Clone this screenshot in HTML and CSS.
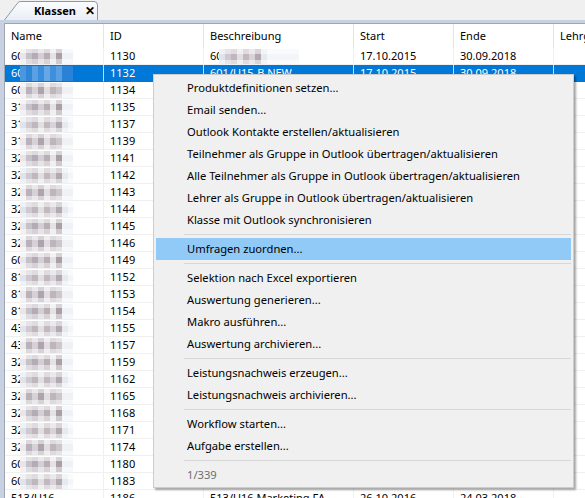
FILE: index.html
```html
<!DOCTYPE html>
<html lang="de">
<head>
    <meta charset="UTF-8">
    <title>Klassen</title>
    <link rel="stylesheet" href="styles.css">
</head>
<body>
<div class="page">
    <div class="tabstrip">
        <div class="tab">
            <svg class="tab-shape" width="95" height="20" viewBox="0 0 95 20">
                <defs>
                    <linearGradient id="tabfill" x1="0" y1="0" x2="0" y2="1">
                        <stop offset="0" stop-color="#fbfcfe"/>
                        <stop offset="1" stop-color="#e9eef7"/>
                    </linearGradient>
                </defs>
                <path d="M0.5 20 L14 2.5 Q15 1.5 17 1.5 L90 1.5 Q93.5 1.5 93.5 5 L93.5 20" fill="url(#tabfill)" stroke="#8d98a8"/>
            </svg>
            <span class="tab-title">Klassen</span>
            <span class="tab-close">&#x2715;</span>
        </div>
    </div>

    <div class="frame">
        <div class="grid">
            <div class="row head">
                <div class="cell">Name</div><div class="cell">ID</div><div class="cell">Beschreibung</div><div class="cell">Start</div><div class="cell">Ende</div><div class="cell">Lehrg</div>
            </div>
            <div class="row">
                <div class="cell">60<span class="blur b1"></span></div><div class="cell">1130</div><div class="cell">60<span class="blur b2 wide"></span></div><div class="cell">17.10.2015</div><div class="cell">30.09.2018</div><div class="cell"></div>
            </div>
            <div class="row selected">
                <div class="cell">60<span class="blur sel"></span></div><div class="cell">1132</div><div class="cell">601/U15-B NEW</div><div class="cell">17.10.2015</div><div class="cell">30.09.2018</div><div class="cell"></div>
            </div>
            <div class="row"><div class="cell">60<span class="blur b3"></span></div><div class="cell">1134</div><div class="cell"></div><div class="cell"></div><div class="cell"></div><div class="cell"></div></div>
            <div class="row"><div class="cell">31<span class="blur b1"></span></div><div class="cell">1135</div><div class="cell"></div><div class="cell"></div><div class="cell"></div><div class="cell"></div></div>
            <div class="row"><div class="cell">31<span class="blur b2"></span></div><div class="cell">1137</div><div class="cell"></div><div class="cell"></div><div class="cell"></div><div class="cell"></div></div>
            <div class="row"><div class="cell">31<span class="blur b3"></span></div><div class="cell">1139</div><div class="cell"></div><div class="cell"></div><div class="cell"></div><div class="cell"></div></div>
            <div class="row"><div class="cell">32<span class="blur b1"></span></div><div class="cell">1141</div><div class="cell"></div><div class="cell"></div><div class="cell"></div><div class="cell"></div></div>
            <div class="row"><div class="cell">32<span class="blur b2"></span></div><div class="cell">1142</div><div class="cell"></div><div class="cell"></div><div class="cell"></div><div class="cell"></div></div>
            <div class="row"><div class="cell">32<span class="blur b3"></span></div><div class="cell">1143</div><div class="cell"></div><div class="cell"></div><div class="cell"></div><div class="cell"></div></div>
            <div class="row"><div class="cell">32<span class="blur b2"></span></div><div class="cell">1144</div><div class="cell"></div><div class="cell"></div><div class="cell"></div><div class="cell"></div></div>
            <div class="row"><div class="cell">32<span class="blur b1"></span></div><div class="cell">1145</div><div class="cell"></div><div class="cell"></div><div class="cell"></div><div class="cell"></div></div>
            <div class="row"><div class="cell">32<span class="blur b3"></span></div><div class="cell">1146</div><div class="cell"></div><div class="cell"></div><div class="cell"></div><div class="cell"></div></div>
            <div class="row"><div class="cell">60<span class="blur b1"></span></div><div class="cell">1149</div><div class="cell"></div><div class="cell"></div><div class="cell"></div><div class="cell"></div></div>
            <div class="row"><div class="cell">81<span class="blur b2"></span></div><div class="cell">1152</div><div class="cell"></div><div class="cell"></div><div class="cell"></div><div class="cell"></div></div>
            <div class="row"><div class="cell">81<span class="blur b3"></span></div><div class="cell">1153</div><div class="cell"></div><div class="cell"></div><div class="cell"></div><div class="cell"></div></div>
            <div class="row"><div class="cell">81<span class="blur b1"></span></div><div class="cell">1154</div><div class="cell"></div><div class="cell"></div><div class="cell"></div><div class="cell"></div></div>
            <div class="row"><div class="cell">43<span class="blur b2"></span></div><div class="cell">1155</div><div class="cell"></div><div class="cell"></div><div class="cell"></div><div class="cell"></div></div>
            <div class="row"><div class="cell">43<span class="blur b3"></span></div><div class="cell">1157</div><div class="cell"></div><div class="cell"></div><div class="cell"></div><div class="cell"></div></div>
            <div class="row"><div class="cell">32<span class="blur b1"></span></div><div class="cell">1159</div><div class="cell"></div><div class="cell"></div><div class="cell"></div><div class="cell"></div></div>
            <div class="row"><div class="cell">32<span class="blur b2"></span></div><div class="cell">1162</div><div class="cell"></div><div class="cell"></div><div class="cell"></div><div class="cell"></div></div>
            <div class="row"><div class="cell">32<span class="blur b3"></span></div><div class="cell">1165</div><div class="cell"></div><div class="cell"></div><div class="cell"></div><div class="cell"></div></div>
            <div class="row"><div class="cell">32<span class="blur b1"></span></div><div class="cell">1168</div><div class="cell"></div><div class="cell"></div><div class="cell"></div><div class="cell"></div></div>
            <div class="row"><div class="cell">32<span class="blur b2"></span></div><div class="cell">1171</div><div class="cell"></div><div class="cell"></div><div class="cell"></div><div class="cell"></div></div>
            <div class="row"><div class="cell">32<span class="blur b3"></span></div><div class="cell">1174</div><div class="cell"></div><div class="cell"></div><div class="cell"></div><div class="cell"></div></div>
            <div class="row"><div class="cell">60<span class="blur b1"></span></div><div class="cell">1180</div><div class="cell"></div><div class="cell"></div><div class="cell"></div><div class="cell"></div></div>
            <div class="row"><div class="cell">60<span class="blur b2"></span></div><div class="cell">1183</div><div class="cell"></div><div class="cell"></div><div class="cell"></div><div class="cell"></div></div>
            <div class="row"><div class="cell">513/U16</div><div class="cell">1186</div><div class="cell">513/U16 Marketing FA</div><div class="cell">26.10.2016</div><div class="cell">24.03.2018</div><div class="cell"></div></div>
        </div>
    </div>

    <div class="menu">
        <div class="item">Produktdefinitionen setzen...</div>
        <div class="item">Email senden...</div>
        <div class="item">Outlook Kontakte erstellen/aktualisieren</div>
        <div class="item">Teilnehmer als Gruppe in Outlook übertragen/aktualisieren</div>
        <div class="item">Alle Teilnehmer als Gruppe in Outlook übertragen/aktualisieren</div>
        <div class="item">Lehrer als Gruppe in Outlook übertragen/aktualisieren</div>
        <div class="item">Klasse mit Outlook synchronisieren</div>
        <div class="sep"></div>
        <div class="item hover">Umfragen zuordnen...</div>
        <div class="sep"></div>
        <div class="item">Selektion nach Excel exportieren</div>
        <div class="item">Auswertung generieren...</div>
        <div class="item">Makro ausführen...</div>
        <div class="item">Auswertung archivieren...</div>
        <div class="sep"></div>
        <div class="item">Leistungsnachweis erzeugen...</div>
        <div class="item">Leistungsnachweis archivieren...</div>
        <div class="sep"></div>
        <div class="item">Workflow starten...</div>
        <div class="item">Aufgabe erstellen...</div>
        <div class="sep"></div>
        <div class="item disabled">1/339</div>
    </div>
</div>
</body>
</html>
```

FILE: styles.css
```css
body {
    margin: 0;
    font-family: 'Noto Sans', 'Open Sans', Arial, sans-serif;
    font-size: 11px;
    color: #000;
    background-color: #f0f0f0;
    overflow: hidden;
}
.page {
    position: relative;
    width: 585px;
    height: 498px;
    overflow: hidden;
}
.tabstrip {
    height: 20px;
    background-color: #f0f0f0;
    display: flex;
    align-items: flex-end;
    padding-left: 4px;
}
.tab {
    position: relative;
    width: 95px;
    height: 20px;
    display: flex;
    align-items: center;
}
.tab-shape {
    position: absolute;
    left: 0;
    top: 0;
}
.tab-title {
    position: relative;
    margin-left: 30px;
    font-weight: bold;
}
.tab-close {
    position: relative;
    margin-left: 9px;
    font-size: 12px;
    font-weight: bold;
}
.frame {
    background-color: #c7d1e2;
    padding: 3px 0 0 4px;
    height: 475px;
}
.grid {
    background-color: white;
    border-left: 1px solid #9ea6b2;
    border-top: 1px solid #9ea6b2;
    height: 100%;
    overflow: hidden;
}
.row {
    display: grid;
    grid-template-columns: 99px 100px 150px 100px 100px 100px;
    height: 17px;
    line-height: 16px;
    white-space: nowrap;
}
.row .cell {
    padding-left: 6px;
    overflow: hidden;
    border-right: 1px solid #f0f0f0;
    border-bottom: 1px solid #f0f0f0;
}
.row.head {
    height: 24px;
    line-height: 24px;
}
.row.head .cell {
    border-bottom: none;
    border-right-color: #e5e5e5;
}
.row.selected {
    background-color: #0078d7;
    color: white;
}
.row.selected .cell {
    border-right-color: #c4dcf2;
    border-bottom-color: #0078d7;
}
.blur {
    display: inline-block;
    vertical-align: top;
    margin-top: 1px;
    margin-left: -4px;
    width: 53px;
    height: 15px;
}
.blur.wide {
    width: 80px;
}
.b1 {
    background:
        linear-gradient(180deg, rgba(255,255,255,.55) 0 4px, transparent 4px 10px, rgba(255,255,255,.45) 10px),
        linear-gradient(90deg, #e8e6eb 0 6px, #c6c0c8 6px 12px, #b3acb6 12px 18px, #d4cfd5 18px 24px, #b8aeb3 24px 30px, #e5e2e6 30px 36px, #a99fa5 36px 42px, #eef1f6 42px);
}
.b2 {
    background:
        linear-gradient(180deg, rgba(255,255,255,.5) 0 5px, transparent 5px 11px, rgba(255,255,255,.5) 11px),
        linear-gradient(90deg, #dfe3ea 0 6px, #cfc9d1 6px 12px, #bfb7bd 12px 18px, #e2dfe3 18px 24px, #c1b9bd 24px 30px, #d8d3d8 30px 36px, #b3aab0 36px 42px, #e6e9ef 42px 48px, #f4f5f8 48px);
}
.b3 {
    background:
        linear-gradient(180deg, rgba(255,255,255,.5) 0 4px, transparent 4px 11px, rgba(255,255,255,.5) 11px),
        linear-gradient(90deg, #ebe9ee 0 6px, #b9b2ba 6px 12px, #d6d1d6 12px 18px, #ada5ab 18px 24px, #e0dce0 24px 30px, #bdb5ba 30px 36px, #ccc7cc 36px 42px, #f0f1f4 42px);
}
.sel {
    background: linear-gradient(90deg, #4a97e0 0 6px, #2f86d9 6px 12px, #5aa1e4 12px 18px, #3a8cdc 18px 24px, #66a8e6 24px 30px, #3f8fdd 30px 36px, #5b9fe3 36px 42px, #2a82d8 42px);
}
.menu {
    position: absolute;
    left: 153px;
    top: 74px;
    width: 416px;
    padding: 2px 2px 1px 1px;
    background-color: #f0f0f0;
    border: 1px solid #cccccc;
    box-shadow: 2px 2px 2px rgba(0,0,0,0.35);
    font-size: 11.2px;
}
.item {
    height: 22px;
    line-height: 22px;
    padding-left: 32px;
    white-space: nowrap;
}
.item.hover {
    background-color: #91c9f7;
    margin-left: 1px;
    padding-left: 31px;
}
.item.disabled {
    color: #6d6d6d;
}
.sep {
    height: 7px;
    margin-left: 29px;
    background: linear-gradient(#d7d7d7, #d7d7d7) no-repeat 0 3px / 100% 1px;
}
```
